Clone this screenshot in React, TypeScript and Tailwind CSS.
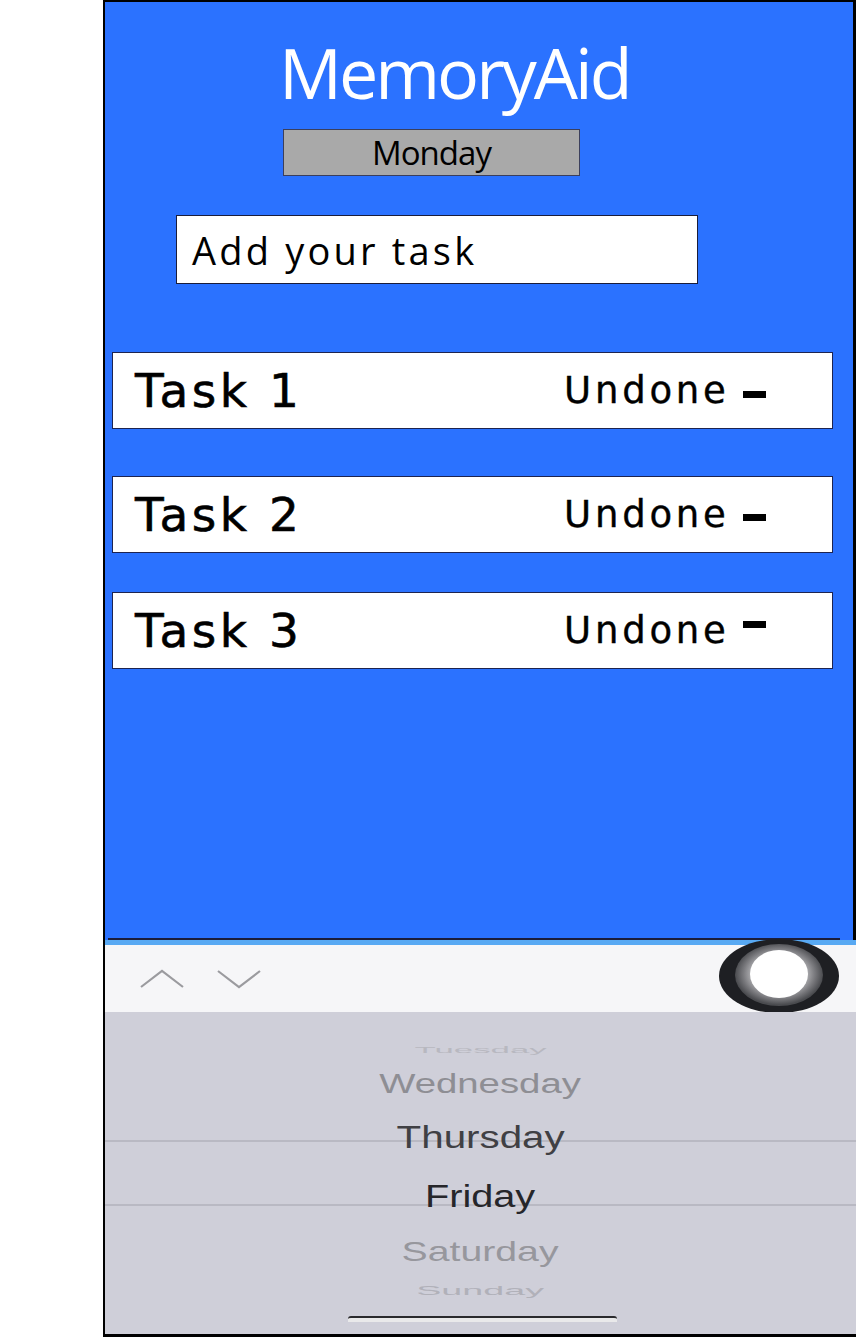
import type { ReactNode } from 'react'

interface Task {
  id: number
  name: string
  status: string
  dashClassName: string
}

const tasks: Task[] = [
  { id: 1, name: 'Task 1', status: 'Undone', dashClassName: 'mt-[7px]' },
  { id: 2, name: 'Task 2', status: 'Undone', dashClassName: 'mt-[5px]' },
  { id: 3, name: 'Task 3', status: 'Undone', dashClassName: '-mt-[13px]' },
]

function TaskRow({ task, className }: { task: Task; className?: string }) {
  return (
    <div
      className={`ml-[7px] flex h-[77px] w-[721px] items-center border border-[#1d2450] bg-white ${className ?? ''}`}
    >
      <span className="w-[451px] pl-[22px] font-['DejaVu_Sans',sans-serif] text-[47px] leading-none tracking-[3.5px] text-black [-webkit-text-stroke:0.6px_black]">
        {task.name}
      </span>
      <span className="font-['DejaVu_Sans',sans-serif] text-[37px] leading-none tracking-[3.8px] text-black [-webkit-text-stroke:0.4px_black]">
        {task.status}
      </span>
      <span className={`ml-[13px] h-[7px] w-[23px] bg-black ${task.dashClassName}`} />
    </div>
  )
}

function PickerItem({ className, children }: { className: string; children: ReactNode }) {
  return (
    <div className={`flex items-center justify-center font-['Liberation_Sans',sans-serif] leading-none ${className}`}>
      <span className="block">{children}</span>
    </div>
  )
}

export default function App() {
  return (
    <div className="h-[1337px] w-[866px] overflow-hidden bg-white">
      <div className="ml-[103px] flex h-[1337px] w-[753px] flex-col border-b-[3px] border-l-2 border-black">
        {/* app screen */}
        <section className="flex h-[940px] flex-col border-r-[3px] border-t-2 border-black bg-[#2b72ff] font-['Open_Sans',sans-serif]">
          <h1 className="mt-[35px] pl-[174px] text-[70px] leading-none tracking-[-3px] text-white">MemoryAid</h1>

          <div className="ml-[178px] mt-[22px] flex h-[47px] w-[297px] items-center justify-center border border-[#3b3f5c] bg-[#a9a9a9]">
            <span className="text-[33px] leading-none tracking-[-1px] text-black">Monday</span>
          </div>

          <div className="ml-[71px] mt-[39px] flex h-[69px] w-[522px] items-center border border-[#1a1d3a] bg-white pl-[15px]">
            <span className="text-[38px] leading-none tracking-[3.2px] text-black">Add your task</span>
          </div>

          <TaskRow task={tasks[0]} className="mt-[68px]" />
          <TaskRow task={tasks[1]} className="mt-[47px]" />
          <TaskRow task={tasks[2]} className="mt-[39px]" />

          <div className="flex-1" />
          <div className="ml-[3px] h-[2px] w-[732px] bg-[#1b1d3b]" />
        </section>

        <div className="h-[5px] bg-[#58a9f3]" />

        {/* keyboard toolbar */}
        <div className="relative flex h-[67px] w-[751px] items-center gap-[33px] bg-[#f6f6f8] pl-[35px]">
          <svg width="44" height="20" viewBox="0 0 44 20" fill="none">
            <polyline points="1,18 22,2 43,18" stroke="#9b9b9f" strokeWidth="2.2" />
          </svg>
          <svg width="44" height="20" viewBox="0 0 44 20" fill="none">
            <polyline points="1,2 22,18 43,2" stroke="#9b9b9f" strokeWidth="2.2" />
          </svg>

          <svg
            className="absolute left-[613px] top-[-7px]"
            width="122"
            height="76"
            viewBox="0 0 122 76"
          >
            <defs>
              <radialGradient id="ring" cx="50%" cy="48%" r="50%">
                <stop offset="0%" stopColor="#d0d0d2" />
                <stop offset="60%" stopColor="#b4b4b7" />
                <stop offset="80%" stopColor="#7d7d81" />
                <stop offset="100%" stopColor="#4a4b4f" />
              </radialGradient>
            </defs>
            <ellipse cx="61" cy="38" rx="60" ry="37" fill="#1e1f23" />
            <ellipse cx="61" cy="37" rx="44" ry="31" fill="url(#ring)" />
            <ellipse cx="61" cy="36" rx="29" ry="24" fill="#ffffff" />
          </svg>
        </div>

        {/* day picker */}
        <div className="relative flex flex-1 flex-col bg-[#cfcfd9]">
          <div className="absolute left-0 right-0 top-[128px] h-[2px] bg-[#b9b9c3]" />
          <div className="absolute left-0 right-0 top-[192px] h-[2px] bg-[#b9b9c3]" />

          <PickerItem className="mt-[28px] h-[20px] text-[24px] text-[#b8b8c0] [&>span]:scale-x-[1.45] [&>span]:scale-y-[0.4]">
            Tuesday
          </PickerItem>
          <PickerItem className="h-[48px] text-[27px] text-[#8e8e94] [&>span]:scale-x-[1.42]">Wednesday</PickerItem>
          <PickerItem className="relative h-[58px] text-[31px] text-[#404044] [&>span]:scale-x-[1.3]">Thursday</PickerItem>
          <PickerItem className="relative h-[60px] text-[31px] text-[#26262a] [&>span]:scale-x-[1.28]">Friday</PickerItem>
          <PickerItem className="h-[52px] text-[28px] text-[#97979d] [&>span]:scale-x-[1.4]">Saturday</PickerItem>
          <PickerItem className="h-[24px] text-[26px] text-[#b1b1b9] [&>span]:scale-x-[1.45] [&>span]:scale-y-[0.5]">
            Sunday
          </PickerItem>

          <div className="ml-[243px] mt-[14px] h-[6px] w-[269px] rounded-t-[3px] border-t-2 border-[#2a2a2e] bg-[#e9e9ea]" />
        </div>
      </div>
    </div>
  )
}
